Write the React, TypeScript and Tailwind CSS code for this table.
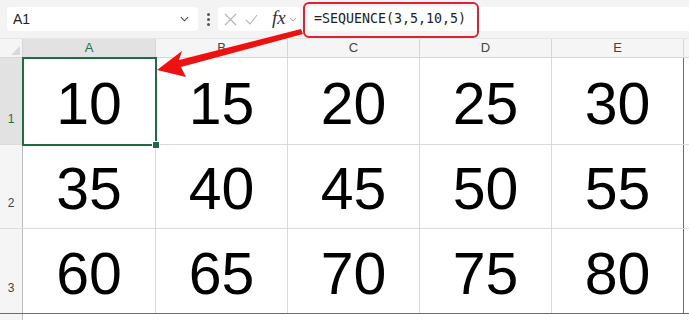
import React from 'react';

const cols = [
  { label: 'A', w: 'w-[133px]' },
  { label: 'B', w: 'w-[132px]' },
  { label: 'C', w: 'w-[132px]' },
  { label: 'D', w: 'w-[132px]' },
  { label: 'E', w: 'w-[132px]' },
];

const rows = [
  { n: 1, h: 'h-[87px]', values: [10, 15, 20, 25, 30] },
  { n: 2, h: 'h-[84px]', values: [35, 40, 45, 50, 55] },
  { n: 3, h: 'h-[85px]', values: [60, 65, 70, 75, 80] },
];

const Chevron = ({ className = '' }: { className?: string }) => (
  <svg viewBox="0 0 10 6" className={className} fill="none" stroke="currentColor" strokeWidth="1.2">
    <path d="M1 1l4 4 4-4" />
  </svg>
);

export default function App() {
  return (
    <div className="relative w-[689px] h-[320px] overflow-hidden bg-white font-['Liberation_Sans',Arial,sans-serif]">
      {/* Formula bar */}
      <div className="flex items-center h-[39px] bg-[#f3f3f3] border-b border-[#e6e6e6]">
        <div className="ml-[7px] w-[191px] h-[24px] bg-white rounded-[4px] flex items-center justify-between pl-[6px] pr-[9px] text-[14px] text-[#222]">
          <span>A1</span>
          <Chevron className="w-[9px] h-[6px] text-[#444]" />
        </div>
        <div className="w-[20px] flex flex-col items-center gap-[2px]">
          <span className="w-[3px] h-[3px] rounded-full bg-[#555]" />
          <span className="w-[3px] h-[3px] rounded-full bg-[#555]" />
          <span className="w-[3px] h-[3px] rounded-full bg-[#555]" />
        </div>
        <div className="w-[82px] h-[24px] bg-white rounded-[4px] flex items-center pl-[6px] text-[#b5b5b5]">
          <svg viewBox="0 0 13 13" className="w-[13px] h-[13px]" fill="none" stroke="currentColor" strokeWidth="1.1">
            <path d="M1 1l11 11M12 1L1 12" />
          </svg>
          <svg viewBox="0 0 13 11" className="ml-[8px] w-[13px] h-[11px]" fill="none" stroke="currentColor" strokeWidth="1.1">
            <path d="M1 6l4 4 7-9" />
          </svg>
          <span className="ml-[14px] font-['Liberation_Serif',serif] italic text-[19px] leading-none text-[#333] -mt-[3px]">fx</span>
          <Chevron className="ml-[3px] w-[8px] h-[5px] text-[#9a9a9a]" />
        </div>
        <div className="ml-[8px] flex-1 h-[24px] bg-white rounded-l-[4px] flex items-center pl-[6px] font-['DejaVu_Sans_Mono','Liberation_Mono',monospace] text-[13.3px] text-[#222]">
          =SEQUENCE(3,5,10,5)
        </div>
      </div>

      {/* Column headers */}
      <div className="flex h-[19px] bg-[#f5f5f5] border-b border-[#d6d6d6] text-[13px] text-[#444]">
        <div className="relative w-[23px] border-r border-[#d6d6d6]">
          <svg viewBox="0 0 10 10" className="absolute right-[2px] bottom-[2px] w-[9px] h-[9px]">
            <path d="M10 0V10H0Z" fill="#d9d9d9" />
          </svg>
        </div>
        {cols.map((c, i) => (
          <div
            key={c.label}
            className={`${c.w} flex items-center justify-center border-r border-[#d6d6d6] ${
              i === 0 ? 'bg-[#e2e2e2] text-[#1e7145]' : ''
            }`}
          >
            {c.label}
          </div>
        ))}
      </div>

      {/* Rows */}
      {rows.map((r) => (
        <div key={r.n} className={`flex ${r.h} border-b border-[#dadada]`}>
          <div
            className={`w-[23px] flex items-end justify-center pb-[16px] text-[12px] border-r border-[#bdbdbd] ${
              r.n === 1 ? 'bg-[#e2e2e2] text-[#1e7145]' : 'bg-[#f5f5f5] text-[#444]'
            }`}
          >
            {r.n}
          </div>
          {r.values.map((v, i) => (
            <div
              key={v}
              className={`${cols[i].w} flex items-center justify-center pt-[6px] text-[59px] leading-none text-black border-r ${
                i === 4 ? 'border-[#4a6fb5]' : 'border-[#dadada]'
              }`}
            >
              {v}
            </div>
          ))}
        </div>
      ))}
      <div className="flex h-[10px] border-t border-[#4a6fb5] -mt-[1px]">
        <div className="w-[23px] bg-[#f5f5f5] border-r border-[#bdbdbd]" />
      </div>

      {/* Active cell selection */}
      <div className="absolute left-[22px] top-[57px] w-[135px] h-[89px] border-2 border-[#1f6b42] pointer-events-none">
        <span className="absolute -right-[4px] -bottom-[4px] w-[6px] h-[6px] bg-[#1f6b42] outline outline-1 outline-white" />
      </div>

      {/* Callout outline around formula */}
      <div className="absolute left-[303px] top-[2px] w-[176px] h-[36px] rounded-[6px] border-2 border-[#df2030] pointer-events-none" />

      {/* Arrow */}
      <svg className="absolute left-0 top-0 pointer-events-none" width="689" height="320" viewBox="0 0 689 320">
        <polygon points="157,70 182,51 179,60 301,29 303,34 181,67 186,77" fill="#ee1111" />
      </svg>
    </div>
  );
}
